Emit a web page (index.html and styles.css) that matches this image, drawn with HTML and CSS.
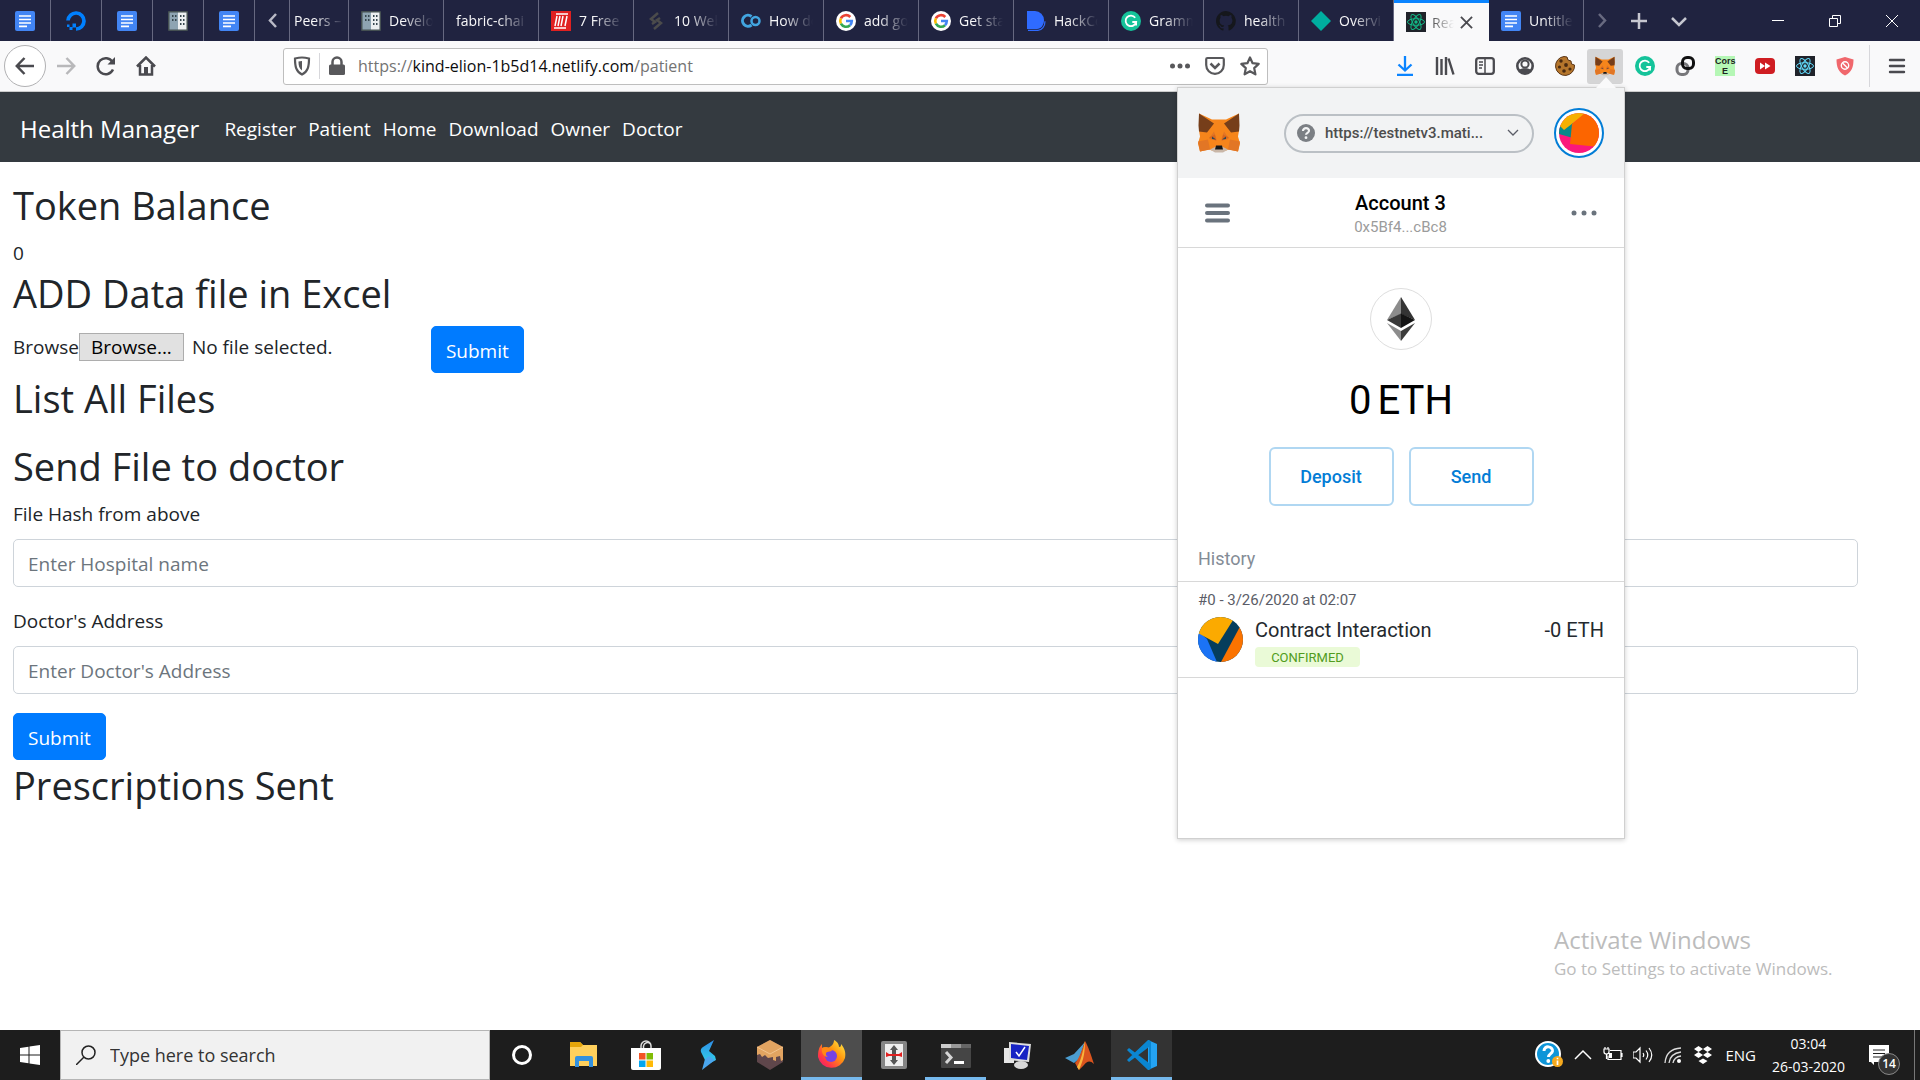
FILE: index.html
```html
<!DOCTYPE html>
<html lang="en">
<head>
<meta charset="utf-8">
<meta name="viewport" content="width=device-width, initial-scale=1">
<title>React App</title>
<link rel="stylesheet" href="styles.css">
</head>
<body>
<svg class="sprite" aria-hidden="true">
  <symbol id="docs" viewBox="0 0 20 20"><rect width="20" height="20" rx="2" fill="#4285f4"/><path d="M4 5h12M4 8.500h12M4 12h12M4 15.300h8" stroke="#fff" stroke-width="1.700"/></symbol>
  <symbol id="building" viewBox="0 0 20 20"><rect width="20" height="20" rx="1" fill="#455052"/><path d="M1.500 1.500h8.500v17H1.500z" fill="#8ea4b2"/><path d="M10 1.500h8.500v17H10z" fill="#eceff0"/><path d="M4 4h1.500v2H4zM7 4h1.500v2H7zM4 8h1.500v2H4zM7 8h1.500v2H7zM12 4h1.500v2H12zM15 4h1.500v2H15zM12 8h1.500v2H12zM15 8h1.500v2H15zM12 12h1.500v2H12zM15 12h1.500v2H15z" fill="#37474f"/></symbol>
  <symbol id="google" viewBox="0 0 20 20"><circle cx="10" cy="10" r="10" fill="#fff"/><g fill="none" stroke-width="2.600"><path d="M4.900 7.300A5.800 5.800 0 0 1 14.300 6" stroke="#ea4335"/><path d="M4.900 12.700a5.800 5.800 0 0 1 0-5.400" stroke="#fbbc05"/><path d="M14 14.200A5.800 5.800 0 0 1 4.900 12.700" stroke="#34a853"/><path d="M10 10h5.800a5.800 5.800 0 0 1-1.800 4.200" stroke="#4285f4"/></g></symbol>
  <symbol id="grammarly" viewBox="0 0 20 20"><circle cx="10" cy="10" r="10" fill="#15c39a"/><path d="M14.200 6.700a5.300 5.300 0 1 0 .9 4.300h-3.800M15.100 11v3.400" fill="none" stroke="#fff" stroke-width="1.800"/></symbol>
  <symbol id="react" viewBox="0 0 20 20"><rect width="20" height="20" fill="#20232a"/><g fill="none" stroke="currentColor"><ellipse cx="10" cy="10" rx="8.500" ry="3.300"/><ellipse cx="10" cy="10" rx="8.500" ry="3.300" transform="rotate(60 10 10)"/><ellipse cx="10" cy="10" rx="8.500" ry="3.300" transform="rotate(120 10 10)"/></g><circle cx="10" cy="10" r="1.700" fill="currentColor"/></symbol>
  <symbol id="fox" viewBox="0 0 42 39"><path d="M1 0l13 6h14L41 0v17l-1 6 2 7-2 8-9-2-6 2h-8l-6-2-9 2-2-8 2-7-1-6z" fill="#f6851b"/><path d="M1 0l15 10-7 9-8-1L.5 12zM41 0L26 10l7 9 8-1 .5-6z" fill="#763e1a"/><path d="M0 28l10-2 2 10-10 2zM42 28l-10-2-2 10 10 2zM11 25l5-7 3 9-6-1zM31 25l-5-7-3 9 6-1z" fill="#e27625"/><path d="M11 24l6-3 1 6zM31 24l-6-3-1 6z" fill="#d7661d"/><path d="M12 36l6-3h6l6 3-5 3h-8z" fill="#c9b7a8"/><path d="M14 23l4 3-4-.5zM28 23l-4 3 4-.5z" fill="#2f4858"/><path d="M18 32h6l1 4h-8z" fill="#161616"/></symbol>
</svg>

<header class="tabbar">
  <nav class="tabs" aria-label="Tabs">
    <a class="tab pinned" href="#" aria-label="Docs"><svg class="i20"><use href="#docs"/></svg></a>
    <a class="tab pinned" href="#" aria-label="DigitalOcean"><svg class="i20" viewBox="0 0 20 20"><path d="M2 9.500a8 8 0 1 1 8 8.500" fill="none" stroke="#0080ff" stroke-width="3.700"/><path d="M6.500 12.500H10v4H6.500zM3.500 16h3v3h-3zM1 13.500h2.500V16H1z" fill="#0080ff"/></svg></a>
    <a class="tab pinned" href="#" aria-label="Docs"><svg class="i20"><use href="#docs"/></svg></a>
    <a class="tab pinned" href="#" aria-label="Developer"><svg class="i20"><use href="#building"/></svg></a>
    <a class="tab pinned" href="#" aria-label="Docs"><svg class="i20"><use href="#docs"/></svg></a>
    <button class="tab scroll" aria-label="Scroll left"><svg class="i20" viewBox="0 0 20 20"><path d="M13 3L7 9.500l6 6.500" fill="none" stroke="#b9bac6" stroke-width="2.500"/></svg></button>
    <a class="tab clipped" href="#"><span class="title">Peers –</span></a>
    <a class="tab" href="#"><svg class="i20"><use href="#building"/></svg><span class="title">Develo</span></a>
    <a class="tab" href="#"><span class="title">fabric-chai</span></a>
    <a class="tab" href="#"><svg class="i20" viewBox="0 0 20 20"><rect width="20" height="20" fill="#e02020"/><path d="M5 3h12M3 17h12M6 5L4 15M9 5L7 15M12 5l-2 10M16 5l-2 10" stroke="#fff" stroke-width="1.500"/></svg><span class="title">7 Free</span></a>
    <a class="tab" href="#"><svg class="i20" viewBox="0 0 20 20"><path d="M12 2L5 8l4 3-3 2M8 18l7-6-4-3 3-2" fill="none" stroke="#4b4b4b" stroke-width="2.500"/></svg><span class="title">10 Web</span></a>
    <a class="tab" href="#"><svg class="i20" viewBox="0 0 20 20"><path d="M10.500 5.500a5.500 5.500 0 1 0 0 8.500" fill="none" stroke="#42a5e0" stroke-width="3"/><circle cx="14.500" cy="10" r="4" fill="none" stroke="#42a5e0" stroke-width="2.500"/></svg><span class="title">How do</span></a>
    <a class="tab" href="#"><svg class="i20"><use href="#google"/></svg><span class="title">add go</span></a>
    <a class="tab" href="#"><svg class="i20"><use href="#google"/></svg><span class="title">Get sta</span></a>
    <a class="tab" href="#"><svg class="i20" viewBox="0 0 20 20"><path d="M1 0h8a9 9 0 0 1 9 9c0 5-3 9-7 9H1z" fill="#2f6bff"/><path d="M2 19.300h10c4 0 7-4 7-9" fill="none" stroke="#2f6bff" stroke-width="1.200"/></svg><span class="title">HackCo</span></a>
    <a class="tab" href="#"><svg class="i20"><use href="#grammarly"/></svg><span class="title">Gramm</span></a>
    <a class="tab" href="#"><svg class="i20" viewBox="0 0 16 16"><path fill="#15171c" d="M8 0C3.600 0 0 3.600 0 8c0 3.500 2.300 6.500 5.500 7.600.4.100.5-.2.500-.4v-1.400c-2.200.5-2.700-1-2.700-1-.4-.9-.9-1.200-.9-1.200-.7-.5.1-.5.1-.5.800.1 1.200.8 1.200.8.700 1.200 1.900.9 2.300.7.100-.5.300-.9.500-1.100-1.800-.2-3.600-.9-3.600-4 0-.9.300-1.600.8-2.100-.1-.2-.4-1 .1-2.100 0 0 .7-.2 2.200.8a7.600 7.600 0 0 1 4 0c1.500-1 2.200-.8 2.200-.8.400 1.100.2 1.900.1 2.100.5.600.8 1.300.8 2.100 0 3.100-1.900 3.700-3.700 3.900.3.300.6.800.6 1.500v2.200c0 .2.100.5.600.4A8 8 0 0 0 8 0z"/></svg><span class="title">health</span></a>
    <a class="tab" href="#"><svg class="i20" viewBox="0 0 20 20"><path d="M10 0l10 10-10 10L0 10z" fill="#00ad9f"/></svg><span class="title">Overvi</span></a>
    <a class="tab active" href="#" aria-current="page"><svg class="i20 teal"><use href="#react"/></svg><span class="title">Rea</span><svg class="x" viewBox="0 0 14 14"><path d="M1 1l12 12M13 1L1 13" stroke="#4a4a4f" stroke-width="2"/></svg></a>
    <a class="tab" href="#"><svg class="i20"><use href="#docs"/></svg><span class="title">Untitle</span></a>
  </nav>
  <button class="tabtool" aria-label="Scroll right"><svg class="i20" viewBox="0 0 20 20"><path d="M7 3l6 6.500L7 16" fill="none" stroke="#686a80" stroke-width="2.500"/></svg></button>
  <button class="tabtool" aria-label="New tab"><svg class="i20" viewBox="0 0 20 20"><path d="M10 2v16M2 10h16" stroke="#c6c7d0" stroke-width="2.500"/></svg></button>
  <button class="tabtool" aria-label="All tabs"><svg class="i20" viewBox="0 0 20 20"><path d="M3 7l7 7 7-7" fill="none" stroke="#c6c7d0" stroke-width="2.500"/></svg></button>
  <div class="window-controls">
    <button aria-label="Minimize"><svg class="i14" viewBox="0 0 14 14"><path d="M1 6.500h12" stroke="#fff"/></svg></button>
    <button aria-label="Restore"><svg class="i14" viewBox="0 0 14 14"><path d="M1.500 4.500h8v8h-8zM4.500 4V1.500h8v8H10" fill="none" stroke="#fff"/></svg></button>
    <button aria-label="Close"><svg class="i14" viewBox="0 0 14 14"><path d="M1 1l12 12M13 1L1 13" stroke="#fff"/></svg></button>
  </div>
</header>

<div class="toolbar">
  <button class="round" aria-label="Back"><svg class="i20" viewBox="0 0 20 20"><path d="M19 10H2M9.500 2L1.800 10l7.700 8" fill="none" stroke="#4a4a4f" stroke-width="2.500"/></svg></button>
  <button class="tool" aria-label="Forward"><svg class="i20" viewBox="0 0 20 20"><path d="M1 10h17M10.500 2l7.700 8-7.700 8" fill="none" stroke="#b8b8ba" stroke-width="2.500"/></svg></button>
  <button class="tool" aria-label="Reload"><svg class="i20" viewBox="0 0 20 20"><path d="M17 13.500A8 8 0 1 1 16.500 6" fill="none" stroke="#4a4a4f" stroke-width="2.500"/><path d="M19 1v7.500h-7.500z" fill="#4a4a4f"/></svg></button>
  <button class="tool" aria-label="Home"><svg class="i20" viewBox="0 0 20 20"><path d="M1 10.500l9-9 9 9M4 9v9.500h12V9" fill="none" stroke="#4a4a4f" stroke-width="2.500"/><path d="M8 11h4v8H8z" fill="#4a4a4f"/></svg></button>
  <div class="urlbar">
    <svg class="i20" viewBox="0 0 20 20"><path d="M10 1.500c3 0 5 .5 7 1 0 8-1 13-7 16-6-3-7-8-7-16 2-.5 4-1 7-1z" fill="none" stroke="#58585b" stroke-width="2.200"/><path d="M10 5c-1.500 0-2.500.2-3.500.5 0 4 .5 7 3.500 9z" fill="#58585b"/></svg>
    <span class="url-sep"></span>
    <svg class="i20" viewBox="0 0 20 20"><rect x="2" y="8.500" width="16" height="10.500" rx="1.500" fill="#58585b"/><path d="M5.500 9V6a4.500 4.500 0 0 1 9 0v3" fill="none" stroke="#58585b" stroke-width="2.500"/></svg>
    <div class="url" role="textbox" contenteditable="true" spellcheck="false" aria-label="Address">https://<span class="host">kind-elion-1b5d14.netlify.com</span>/patient</div>
    <button aria-label="Page actions"><svg class="i20" viewBox="0 0 20 20"><g fill="#58585b"><circle cx="2.500" cy="10" r="2.500"/><circle cx="10" cy="10" r="2.500"/><circle cx="17.500" cy="10" r="2.500"/></g></svg></button>
    <button aria-label="Save to Pocket"><svg class="i20" viewBox="0 0 20 20"><path d="M2.500 2h15q1.300 0 1.300 1.300V9a8.800 8.800 0 0 1-17.600 0V3.300Q1.200 2 2.500 2z" fill="none" stroke="#58585b" stroke-width="2.200"/><path d="M5.500 7.500L10 12l4.500-4.500" fill="none" stroke="#58585b" stroke-width="2.500"/></svg></button>
    <button aria-label="Bookmark"><svg class="i20" viewBox="0 0 20 20"><path d="M10 1.500l2.600 5.700 6.100.7-4.500 4.200 1.200 6.200-5.400-3.100-5.400 3.100 1.200-6.200L1.300 7.900l6.100-.7z" fill="none" stroke="#58585b" stroke-width="2.200" stroke-linejoin="round"/></svg></button>
  </div>
  <button class="tool" aria-label="Downloads"><svg class="i20" viewBox="0 0 20 20"><path d="M10 0v14M3.500 8.500l6.500 6 6.500-6M2 19h16" fill="none" stroke="#0a84ff" stroke-width="2.300"/></svg></button>
  <button class="tool" aria-label="Library"><svg class="i20" viewBox="0 0 20 20"><path d="M2 1v18M6.500 3v16M11 1v18M13.500 2.500L18.500 18.500" stroke="#4a4a4f" stroke-width="2.400"/></svg></button>
  <button class="tool" aria-label="Sidebars"><svg class="i20" viewBox="0 0 20 20"><rect x="1.200" y="2.200" width="17.600" height="15.600" rx="2.500" fill="none" stroke="#4a4a4f" stroke-width="2.300"/><path d="M10 3v14" stroke="#4a4a4f" stroke-width="1.500"/><path d="M4 6h4M4 9h4M4 12h3" stroke="#4a4a4f" stroke-width="1.300"/></svg></button>
  <button class="tool" aria-label="Account"><svg class="i20" viewBox="0 0 20 20"><circle cx="10" cy="10" r="7.700" fill="none" stroke="#4a4a4f" stroke-width="2.600"/><circle cx="10" cy="8" r="3.600" fill="#f9f9fa" stroke="#4a4a4f" stroke-width="2"/><path d="M4 14c2-2.500 10-2.500 12 0l-3 4H7z" fill="#4a4a4f"/></svg></button>
  <button class="tool" aria-label="Cookies"><svg class="i20" viewBox="0 0 20 20"><path d="M9 .5l3 .5 1 3 3 1 .5 3 3 1A9.500 9.500 0 1 1 9 .5z" fill="#b5762c" stroke="#5a3415"/><g fill="#4a2a10"><circle cx="6" cy="5" r="1.700"/><circle cx="4.500" cy="11" r="1.600"/><circle cx="11" cy="9" r="1.900"/><circle cx="9" cy="15" r="1.800"/><circle cx="15" cy="13" r="1.600"/></g></svg></button>
  <button class="tool pressed" aria-label="MetaMask" aria-expanded="true"><svg class="i20"><use href="#fox"/></svg></button>
  <button class="tool" aria-label="Grammarly"><svg class="i20"><use href="#grammarly"/></svg></button>
  <button class="tool" aria-label="Link"><svg class="i20" viewBox="0 0 20 20"><rect x="2" y="7.500" width="11" height="11" rx="4.500" fill="none" stroke="#77777a" stroke-width="3"/><rect x="7.500" y="1.500" width="11" height="11" rx="4.500" fill="none" stroke="#111" stroke-width="3"/></svg></button>
  <button class="tool" aria-label="Cors E"><span class="cors">Cors<br>E</span></button>
  <button class="tool" aria-label="Video speed"><svg class="i20" viewBox="0 0 20 20"><rect y="2" width="20" height="16" rx="4" fill="#cf1d22"/><path d="M5 6.500l5 3.500-5 3.500zM10 6.500l5.500 3.500-5.500 3.500z" fill="#fff"/></svg></button>
  <button class="tool" aria-label="React tools"><svg class="i20 cyan"><use href="#react"/></svg></button>
  <button class="tool" aria-label="Blocker"><svg class="i20" viewBox="0 0 20 20"><path d="M10 1l8.500 2.500c0 8-2 12.500-8.500 16C3.500 16 1.500 11.500 1.500 3.500z" fill="#f0676c"/><circle cx="10" cy="9.500" r="3.700" fill="none" stroke="#fff" stroke-width="1.400"/><path d="M7.500 7l5 5" stroke="#fff" stroke-width="1.400"/></svg></button>
  <button class="menu" aria-label="Menu"><svg class="i20" viewBox="0 0 20 20"><path d="M3 4h14M3 10h14M3 16h14" stroke="#4a4a4f" stroke-width="2.400" stroke-linecap="round"/></svg></button>
</div>

<div class="page">
  <nav class="navbar">
    <a class="brand" href="#">Health Manager</a>
    <a href="#">Register</a>
    <a href="#">Patient</a>
    <a href="#">Home</a>
    <a href="#">Download</a>
    <a href="#">Owner</a>
    <a href="#">Doctor</a>
  </nav>
  <main class="content">
    <h2>Token Balance</h2>
    <p>0</p>
    <h2>ADD Data file in Excel</h2>
    <form class="upload">
      <label for="excel">Browse</label>
      <input class="file-input" type="file" id="excel">
      <label class="file-button" for="excel">Browse...</label>
      <span class="file-name">No file selected.</span>
      <button class="btn" type="button">Submit</button>
    </form>
    <h2>List All Files</h2>
    <h2 class="section">Send File to doctor</h2>
    <form class="send">
      <label for="hash">File Hash from above</label>
      <input type="text" id="hash" placeholder="Enter Hospital name">
      <label for="doctor">Doctor's Address</label>
      <input type="text" id="doctor" placeholder="Enter Doctor's Address">
      <button class="btn" type="button">Submit</button>
    </form>
    <h2>Prescriptions Sent</h2>
  </main>
  <aside class="watermark">
    <div class="wm-title">Activate Windows</div>
    <div class="wm-text">Go to Settings to activate Windows.</div>
  </aside>
</div>

<section class="wallet" aria-label="MetaMask">
  <svg class="pointer" viewBox="0 0 20 11"><path d="M0 11L10 0l10 11z" fill="#f9f9fa"/></svg>
  <header class="wallet-top">
    <svg class="fox"><use href="#fox"/></svg>
    <button class="network"><svg class="q" viewBox="0 0 18 18"><circle cx="9" cy="9" r="9" fill="#7b7f84"/><path d="M6 7c0-4 6.200-3.600 6 0-.2 1.800-3 2-3 3.800" fill="none" stroke="#f2f3f4" stroke-width="2.200"/><circle cx="9" cy="13.700" r="1.400" fill="#f2f3f4"/></svg><span>https://testnetv3.mati...</span><svg class="caret" viewBox="0 0 12 8"><path d="M1 1l5 5 5-5" fill="none" stroke="#5b5d67" stroke-width="1.300"/></svg></button>
    <button class="avatar" aria-label="Accounts"><svg viewBox="0 0 40 40"><clipPath id="c1"><circle cx="20" cy="20" r="20"/></clipPath><g clip-path="url(#c1)"><path d="M0 0h40v40H0z" fill="#fb187c"/><path d="M0 14l14-6v17L0 21z" fill="#07898a"/><path d="M0 0h27L5 17l-5-5z" fill="#f5b000"/><path d="M26 0h14v34l-29-3 2-20z" fill="#fc6500"/></g></svg></button>
  </header>
  <div class="account">
    <button aria-label="Wallet menu"><svg class="burger" viewBox="0 0 25 20"><path d="M2 2.500h21M2 10h21M2 17.500h21" stroke="#6a737d" stroke-width="4" stroke-linecap="round"/></svg></button>
    <div class="who"><strong>Account 3</strong><span>0x5Bf4...cBc8</span></div>
    <button aria-label="Account options"><svg class="dots" viewBox="0 0 26 6"><g fill="#6a737d"><circle cx="3" cy="3" r="2.500"/><circle cx="13" cy="3" r="2.500"/><circle cx="23" cy="3" r="2.500"/></g></svg></button>
  </div>
  <div class="balance">
    <span class="eth"><svg viewBox="0 0 28 44"><path d="M14 0L0 23l14-6z" fill="#8c8c8c"/><path d="M14 0l14 23-14-6z" fill="#343434"/><path d="M14 16.500L0 23l14 8z" fill="#393939"/><path d="M14 16.500L28 23l-14 8z" fill="#141414"/><path d="M0 26l14 8v10z" fill="#8c8c8c"/><path d="M28 26l-14 8v10z" fill="#3c3c3b"/></svg></span>
    <div class="amount"><span>0</span><span>ETH</span></div>
    <div class="actions"><button>Deposit</button><button>Send</button></div>
  </div>
  <h3>History</h3>
  <article class="tx">
    <div class="tx-date">#0 - 3/26/2020 at 02:07</div>
    <div class="tx-row">
      <svg class="tx-icon" viewBox="0 0 45 45"><clipPath id="c2"><circle cx="22.500" cy="22.500" r="22.500"/></clipPath><g clip-path="url(#c2)"><path d="M0 0h45v45H0z" fill="#053d5c"/><path d="M0 14l9 8 10 23H0z" fill="#1b73f5"/><path d="M0 0h37L20 27 0 16z" fill="#fbaa00"/><path d="M45 4L23 45h22z" fill="#fb7300"/></g></svg>
      <div class="tx-main"><div class="tx-name">Contract Interaction</div><span class="badge">CONFIRMED</span></div>
      <div class="tx-name">-0 ETH</div>
    </div>
  </article>
</section>

<footer class="taskbar">
  <button class="start" aria-label="Start"><svg class="i20" viewBox="0 0 20 20"><path d="M0 3l8.500-1.300v7.800H0zM9.500 1.500L20 0v9.500H9.500zM0 10.500h8.500v7.800L0 17zM9.500 10.500H20V20L9.500 18.500z" fill="#fff"/></svg></button>
  <label class="search"><svg class="i20" viewBox="0 0 20 20"><circle cx="12.500" cy="7.500" r="6.500" fill="none" stroke="#222" stroke-width="1.500"/><path d="M8 12L0 20" stroke="#222" stroke-width="1.500"/></svg><input type="text" placeholder="Type here to search" aria-label="Search"></label>
  <div class="apps">
    <button aria-label="Cortana"><svg class="i20" viewBox="0 0 20 20"><circle cx="10" cy="10" r="8.500" fill="none" stroke="#fff" stroke-width="3"/></svg></button>
    <button aria-label="File Explorer"><svg class="i30" viewBox="0 0 30 30"><path d="M1 3q0-1 1-1h9l3 3h14v21H1z" fill="#ffd05c"/><path d="M1 3q0-1 1-1h9l3 3-2 2H1z" fill="#e5a50a"/><path d="M6 26V18q0-2 2-2h14q2 0 2 2v9h-4v-6h-10v6H6z" fill="#3391df"/></svg></button>
    <button aria-label="Store"><svg class="i30" viewBox="0 0 30 30"><path d="M10 9V6a5 5 0 0 1 10 0v3M12.500 9V6a4 4 0 0 1 7-2" fill="none" stroke="#ddd" stroke-width="1.500"/><path d="M0 8h30v20q0 2-2 2H2q-2 0-2-2z" fill="#fff"/><path d="M8 13h6.500v6.500H8z" fill="#f35325"/><path d="M15.500 13H22v6.500h-6.500z" fill="#81bc06"/><path d="M8 20.500h6.500V27H8z" fill="#05a6f0"/><path d="M15.500 20.500H22V27h-6.500z" fill="#ffba08"/></svg></button>
    <button aria-label="Shortcut"><svg class="i30" viewBox="0 0 30 30"><defs><linearGradient id="g1" x2="0" y2="1"><stop stop-color="#2f8be6"/><stop offset="1" stop-color="#31d5ea"/></linearGradient></defs><path d="M21 0L10 7q-3 2-2 5l4 8 3 4 8-4-1-4-6-5z" fill="url(#g1)"/><path d="M22 20L9 30l3-11 4-3z" fill="#4aa6ee"/></svg></button>
    <button aria-label="Sandbox"><svg class="i30" viewBox="0 0 30 30"><path d="M15 0l13 7v15l-13 8-13-8V7z" fill="#5f464b"/><path d="M15 0l13 7v13l-2 1-1-5-4 1v4l-3-1v-3l-5 1-3-3-3 2-2-3-3 1V7z" fill="#e2a461"/><path d="M2 7l13 7 13-7" fill="none" stroke="#f2c48e"/></svg></button>
    <button class="running lit" aria-label="Firefox"><svg class="i30" viewBox="0 0 30 30"><defs><linearGradient id="g2" x1="1" x2="0" y2="1"><stop stop-color="#fff44f"/><stop offset=".4" stop-color="#ff980e"/><stop offset=".75" stop-color="#ff3647"/><stop offset="1" stop-color="#e31587"/></linearGradient></defs><path d="M17 0c4 2 5 5 5 7 2 0 2-1 2-3 4 5 5 9 4 14A14 14 0 0 1 1 17C1 11 2 7 5 4v4c2-1 4-1 6 0 2-1 6-3 6-8z" fill="url(#g2)"/><circle cx="14" cy="16" r="6" fill="#7542e5"/><path d="M5 8c4-2 8-1 10 3l-5 1c-2 1-1 4 1 5-4 0-7-4-6-9z" fill="#ff8a16"/></svg></button>
    <button aria-label="Clip tool"><svg class="i30" viewBox="0 0 30 30"><rect x="2" y="1" width="26" height="28" rx="2" fill="#858585"/><path d="M6 4h18v22H6z" fill="#eee"/><path d="M15 5l4 5h-2v10h2l-4 5-4-5h2V10h-2z" fill="#555"/><path d="M7 12l3 2h10l3-2v5l-3-1H10l-3 1z" fill="#e12020"/></svg></button>
    <button class="running" aria-label="Terminal"><svg class="i30" viewBox="0 0 30 30"><rect y="4" width="30" height="24" rx="1" fill="#454545"/><path d="M0 4h10v4H0z" fill="#ccc"/><path d="M10 4h10v4H10z" fill="#999"/><path d="M20 4h10v4H20z" fill="#666"/><path d="M5 12l5 5.500L5 23" fill="none" stroke="#d5d5d5" stroke-width="3"/><path d="M13 21h10v3H13z" fill="#fff"/></svg></button>
    <button aria-label="System"><svg class="i30" viewBox="0 0 30 30"><path d="M1 8h10v15H1z" fill="#e6e6e6"/><path d="M6 2l22 2-2 18-20-2z" fill="#ddd"/><path d="M8 4l18 2-2 14-16-2z" fill="#1723c4"/><path d="M13 12l3 4 6-9" fill="none" stroke="#fff" stroke-width="1.500"/><ellipse cx="18" cy="25" rx="7" ry="4" fill="#d8d8d8"/></svg></button>
    <button aria-label="MATLAB"><svg class="i30" viewBox="0 0 30 30"><path d="M0 18l9-4 11-12-6 17-5 4z" fill="#4b9dd0"/><path d="M20 1c3 5 6 14 9 23-4-4-7-3-10 1l-5 5-4-7c4-4 7-13 10-22z" fill="#d9541e"/><path d="M20 1c0 10-1 18-6 29l-2-3c4-6 6-16 8-26z" fill="#f9b43b"/></svg></button>
    <button class="running dim" aria-label="Visual Studio Code"><svg class="i30" viewBox="0 0 30 30"><path d="M21 0l9 4v22l-9 4z" fill="#24a3f3"/><path d="M22 7v16L2 8l-2 2 2 2 19 18 3-1V1l-3-1L2 18l-2 2 2 2z" fill="#0a86d1"/></svg></button>
  </div>
  <div class="tray">
    <svg class="i28" viewBox="0 0 28 28"><circle cx="13" cy="13" r="12" fill="#0e95d8" stroke="#fff" stroke-width="2"/><path d="M9 10c0-6 9-5 8.500 0-.5 3-4 3-4 6" fill="none" stroke="#fff" stroke-width="3"/><circle cx="13.300" cy="20" r="1.900" fill="#fff"/><circle cx="22.500" cy="20.500" r="5.500" fill="#f5a91e"/><path d="M22.500 19.500v4.500M22.500 16.800v1.500" stroke="#fff" stroke-width="1.700"/></svg>
    <svg class="i20" viewBox="0 0 20 20"><path d="M2 14l8-8 8 8" fill="none" stroke="#fff" stroke-width="1.500"/></svg>
    <svg class="i20" viewBox="0 0 20 20"><path d="M7 5.500h11v9H5v-4M19 8v4M1 4h5v3q0 2-2.500 2T1 7zM2 2v2M5 2v2M3.500 9v5" fill="none" stroke="#fff" stroke-width="1.200"/><path d="M6 8h3v5H6z" fill="#fff"/></svg>
    <svg class="i20" viewBox="0 0 20 20"><path d="M0 7h3l4-4v14l-4-4H0zM10 8q1.500 2 0 4M13 5.500q3.500 4.500 0 9M16 3q5.500 7 0 14" fill="none" stroke="#fff" stroke-width="1.200"/></svg>
    <svg class="i20" viewBox="0 0 20 20"><path d="M2 18Q3 4 18 3M6 18q1-9.500 12-11M10 18q1-6 8-7" fill="none" stroke="#ddd" stroke-width="1.300"/><circle cx="16" cy="16" r="2" fill="#fff"/></svg>
    <svg class="i20" viewBox="0 0 20 20"><path d="M5.500 1l4.500 3-4.500 3L1 4zM14.500 1L19 4l-4.500 3L10 4zM5.500 7l4.500 3-4.500 3L1 10zM14.500 7l4.500 3-4.500 3-4.500-3zM10 13.500l4.500 2.500-4.500 3-4.500-3z" fill="#fff"/></svg>
    <span class="lang">ENG</span>
    <time class="clock"><span>03:04</span><span>26-03-2020</span></time>
    <button class="notify" aria-label="Notifications"><svg class="i20" viewBox="0 0 20 20"><path d="M0 0h20v17H5v3l-3-3H0z" fill="#fff"/><path d="M4 5h12M4 8.500h12M4 12h12" stroke="#222"/></svg><span class="count">14</span></button>
    <span class="show-desktop"></span>
  </div>
</footer>
</body>
</html>
```

FILE: styles.css
```css
* { box-sizing: border-box; }
html, body { margin: 0; }
body {
  position: relative;
  display: flex;
  flex-direction: column;
  min-height: 100vh;
  overflow-x: hidden;
  background: #fff;
  color: #212529;
  font-family: "Open Sans", "Noto Sans", sans-serif;
}
button { margin: 0; padding: 0; border: 0; background: none; font: inherit; color: inherit; }
a { color: inherit; text-decoration: none; }
svg { display: block; flex: none; }
.sprite { position: absolute; width: 0; height: 0; }
.i14 { width: 14px; height: 14px; }
.i20 { width: 20px; height: 20px; }
.i28 { width: 28px; height: 28px; }
.i30 { width: 30px; height: 30px; }
.teal { color: #12b886; }
.cyan { color: #61dafb; }

/* Browser tabs */
.tabbar { display: flex; height: 41px; background: #202340; color: #f9f9fa; }
.tabs { display: flex; min-width: 0; }
.tab {
  display: flex;
  align-items: center;
  gap: 8px;
  width: 95px;
  padding: 0 10px 0 12px;
  border-right: 1px solid #666880;
  font-size: 14px;
}
.tab.pinned { width: 51px; padding: 0 15px; }
.tab.scroll { width: 35px; padding: 0 8px; }
.tab.clipped { width: 59px; padding: 0 4px; }
.tab.active { gap: 6px; padding-right: 16px; border-top: 3px solid #0a84ff; border-right: 0; background: #f9f9fa; color: #0c0c0d; }
.title {
  flex: 1;
  min-width: 0;
  overflow: hidden;
  white-space: nowrap;
  -webkit-mask-image: linear-gradient(to left, transparent, #000 30px);
  mask-image: linear-gradient(to left, transparent, #000 30px);
}
.x { width: 13px; height: 13px; }
.tabtool { display: flex; align-items: center; justify-content: center; width: 40px; }
.tabs + .tabtool { width: 35px; }
.window-controls { display: flex; margin-left: auto; }
.window-controls button { display: flex; align-items: center; justify-content: center; width: 57px; }

/* Navigation toolbar */
.toolbar {
  display: flex;
  align-items: center;
  height: 51px;
  padding: 0 7px 0 4px;
  border-bottom: 1px solid #ccc;
  background: #f9f9fa;
}
.round {
  display: flex;
  align-items: center;
  justify-content: center;
  width: 42px;
  height: 42px;
  border: 1px solid #b1b1b3;
  border-radius: 50%;
  background: #fff;
}
.tool { display: flex; align-items: center; justify-content: center; width: 40px; height: 35px; }
.pressed { width: 36px; margin: 0 2px; border-radius: 3px; background: #d5d5d6; }
.urlbar {
  display: flex;
  flex: 1;
  align-items: center;
  gap: 15px;
  height: 37px;
  margin: 0 117px;
  padding: 0 7px 0 8px;
  border: 1px solid #bebebe;
  border-radius: 3px;
  background: #fff;
}
.url-sep { width: 1px; height: 26px; margin: 0 -8px; background: #d7d7db; }
.url { flex: 1; margin-left: -4px; font-size: 16px; color: #737373; white-space: nowrap; outline: 0; }
.host { color: #0c0c0d; }
.cors { width: 20px; height: 20px; background: #b5f7b5; font: 700 9px/10px "Liberation Sans", sans-serif; color: #222; text-align: center; }
.menu { padding: 11px 6px 11px 17px; margin-left: 4px; border-left: 1px solid #d7d7db; }

/* Web page */
.page { position: relative; display: flex; flex: 1; flex-direction: column; font-size: 19px; line-height: 30px; }
.navbar { display: flex; align-items: center; gap: 12px; height: 70px; padding: 3px 20px 0; background: #343a40; color: #fff; }
.brand { margin-right: 13px; font-size: 24px; }
.content { flex: 1; padding: 18px 62px 0 13px; }
h2 { margin: 0 0 8px; font-size: 38px; font-weight: 400; line-height: 50px; }
p { margin: 0; }
.section { margin-top: 18px; }
.upload { display: flex; align-items: center; height: 47px; }
.upload label, .upload span { margin-bottom: 5px; }
.file-input { position: absolute; width: 1px; height: 1px; opacity: 0; }
.file-button {
  width: 105px;
  height: 28px;
  border: 1px solid #adadad;
  background: #e1e1e1;
  color: #000;
  line-height: 27px;
  text-align: center;
}
.file-name { width: 247px; padding-left: 8px; }
.btn {
  height: 47px;
  padding: 3px 14px 0;
  border: 1px solid #007bff;
  border-radius: 5px;
  background: #007bff;
  color: #fff;
}
.send { display: flex; flex-direction: column; align-items: flex-start; }
.send label { margin-bottom: 10px; }
.send input {
  width: 100%;
  height: 48px;
  margin-bottom: 19px;
  padding: 2px 14px 0;
  border: 1px solid #ced4da;
  border-radius: 5px;
  background: #fff;
  font: inherit;
}
.send input::placeholder { color: #6c757d; opacity: 1; }
.watermark { position: absolute; right: 82px; bottom: 48px; width: 284px; color: #bcbcbc; white-space: nowrap; }
.wm-title { font-size: 24px; line-height: 32px; }
.wm-text { font-size: 17px; line-height: 26px; }

/* Wallet popup, anchored under its toolbar button */
.wallet {
  position: absolute;
  top: 87px;
  right: 295px;
  width: 448px;
  min-height: 752px;
  border: 1px solid #d0d0d0;
  background: #fff;
  box-shadow: 0 1px 5px rgba(0, 0, 0, .2);
  color: #000;
  font-family: Roboto, sans-serif;
}
.pointer { position: absolute; top: -11px; right: 8px; width: 20px; height: 11px; }
.wallet-top { display: flex; align-items: center; justify-content: space-between; height: 90px; padding: 0 20px; background: #f2f3f4; }
.fox { width: 42px; height: 40px; }
.network {
  display: flex;
  align-items: center;
  gap: 10px;
  width: 250px;
  height: 39px;
  margin-left: 24px;
  padding: 0 13px 0 11px;
  border: 2px solid #bbc0c5;
  border-radius: 20px;
  color: #4d4d4d;
  font-size: 15px;
  font-weight: 500;
}
.network span { flex: 1; text-align: left; }
.q { width: 18px; height: 18px; }
.caret { width: 12px; height: 8px; }
.avatar { width: 50px; height: 50px; padding: 3px; border: 2px solid #037dd6; border-radius: 50%; background: #fff; }
.account { display: flex; align-items: center; justify-content: space-between; height: 70px; padding: 0 27px; border-bottom: 1px solid #d8d8d8; }
.burger { width: 25px; height: 20px; }
.dots { width: 26px; height: 6px; }
.who { display: flex; flex-direction: column; align-items: center; padding-top: 3px; }
.who strong { font-size: 20px; font-weight: 500; line-height: 26px; }
.who span { color: #9b9b9b; font-size: 15px; line-height: 22px; }
.balance { display: flex; flex-direction: column; align-items: center; padding-top: 40px; }
.eth { display: flex; align-items: center; justify-content: center; width: 62px; height: 62px; border: 1px solid #dedede; border-radius: 50%; }
.eth svg { width: 28px; height: 44px; }
.amount { display: flex; gap: 6px; margin: 26px 0 21px; font-size: 40px; line-height: 50px; }
.actions { display: flex; gap: 15px; }
.actions button { width: 125px; height: 59px; border: 2px solid #b0d7f2; border-radius: 6px; color: #037dd6; font-size: 18px; font-weight: 500; }
h3 { margin: 40px 0 0; padding: 0 20px 9px; border-bottom: 1px solid #d8d8d8; color: #848c96; font-size: 18px; font-weight: 400; line-height: 26px; }
.tx { padding: 8px 20px 10px; border-bottom: 1px solid #d8d8d8; }
.tx-date { color: #5b5d67; font-size: 15px; line-height: 20px; }
.tx-row { display: flex; gap: 12px; padding-top: 6px; }
.tx-icon { width: 45px; height: 45px; margin-top: 1px; }
.tx-main { flex: 1; }
.tx-name { color: #24292e; font-size: 20px; line-height: 28px; }
.badge {
  display: block;
  width: 105px;
  height: 20px;
  margin-top: 3px;
  border-radius: 4px;
  background: #eafad7;
  color: #519c20;
  font-size: 13px;
  line-height: 21px;
  text-align: center;
}

/* Desktop taskbar */
.taskbar { display: flex; height: 50px; background: #1d1d1d; color: #fff; }
.start { display: flex; align-items: center; justify-content: center; width: 60px; }
.search { display: flex; align-items: center; gap: 14px; width: 430px; padding: 0 15px; border: 1px solid #b5b5b5; background: #f1f1f1; }
.search input { flex: 1; min-width: 0; padding: 0; border: 0; outline: 0; background: none; font: inherit; font-size: 18px; }
.search input::placeholder { color: #333; opacity: 1; }
.apps { display: flex; gap: 1px; padding-left: 1px; }
.apps button { display: flex; align-items: center; justify-content: center; width: 61px; border-bottom: 3px solid transparent; padding-top: 3px; }
.apps .running { border-bottom-color: #76b9ed; }
.apps .lit { background: #4d4d4d; }
.apps .dim { background: #333; }
.tray { display: flex; align-items: center; gap: 10px; margin-left: auto; }
.lang { margin-left: 2px; font-size: 15px; }
.clock { display: flex; flex-direction: column; align-items: center; margin: 0 14px 0 6px; font-size: 14px; line-height: 23px; }
.notify { position: relative; margin-right: 15px; }
.count {
  position: absolute;
  top: 8px;
  left: 9px;
  width: 22px;
  height: 22px;
  border: 1px solid #888;
  border-radius: 50%;
  background: #333;
  font-size: 12px;
  font-weight: 600;
  line-height: 20px;
  text-align: center;
}
.show-desktop { width: 6px; height: 100%; border-left: 1px solid #777; }
```
